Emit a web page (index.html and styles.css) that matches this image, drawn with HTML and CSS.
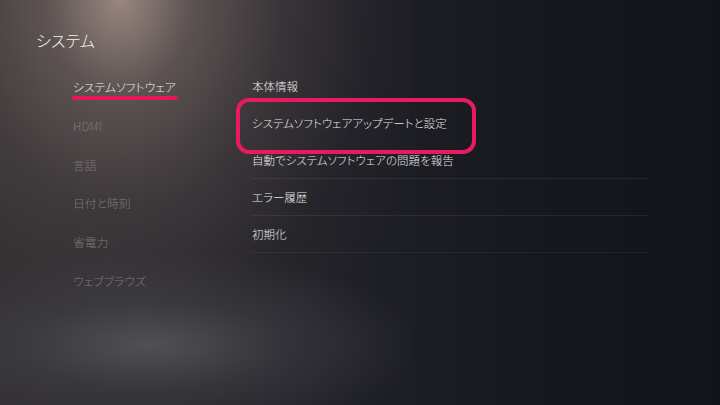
FILE: index.html
```html
<!DOCTYPE html>
<html lang="ja">
<head>
<meta charset="utf-8">
<link rel="stylesheet" href="styles.css">
</head>
<body>
<div class="screen">
  <div class="glow-top"></div>
  <div class="glow-bottom"></div>
  <header class="title">システム</header>
  <main class="main">
    <nav class="nav">
      <div class="nav-item active"><span class="label">システムソフトウェア</span></div>
      <div class="nav-item"><span class="label">HDMI</span></div>
      <div class="nav-item"><span class="label">言語</span></div>
      <div class="nav-item"><span class="label">日付と時刻</span></div>
      <div class="nav-item"><span class="label">省電力</span></div>
      <div class="nav-item"><span class="label">ウェブブラウズ</span></div>
    </nav>
    <section class="list">
      <div class="row first">本体情報</div>
      <div class="row focused">システムソフトウェアアップデートと設定</div>
      <div class="row">自動でシステムソフトウェアの問題を報告</div>
      <div class="row">エラー履歴</div>
      <div class="row">初期化</div>
    </section>
  </main>
</div>
</body>
</html>
```
FILE: styles.css
```css
* { box-sizing: border-box; }
html, body { margin: 0; padding: 0; }
body {
  width: 720px;
  height: 405px;
  overflow: hidden;
  font-family: "Noto Sans CJK JP", "Noto Sans", sans-serif;
  font-feature-settings: "palt";
  background: #15151e;
}
.screen {
  position: relative;
  width: 720px;
  height: 405px;
  overflow: hidden;
  background: linear-gradient(90deg, #302d30 0%, #29272c 25%, #1f1f26 50%, #17171f 75%, #13131c 100%);
}
.glow-top {
  position: absolute;
  left: -170px;
  top: -230px;
  width: 580px;
  height: 600px;
  background: radial-gradient(ellipse at 50% 38%, rgba(165,145,137,0.9) 0%, rgba(125,110,105,0.6) 18%, rgba(90,80,80,0.38) 40%, rgba(60,55,58,0.15) 62%, rgba(40,38,42,0) 80%);
  pointer-events: none;
}
.glow-bottom {
  position: absolute;
  left: -110px;
  top: 255px;
  width: 520px;
  height: 180px;
  background: radial-gradient(ellipse at 50% 50%, rgba(92,92,98,0.75) 0%, rgba(72,72,78,0.45) 35%, rgba(50,50,56,0) 75%);
  pointer-events: none;
}
.title {
  position: relative;
  padding: 29px 0 0 36px;
  height: 68px;
  font-size: 16px;
  line-height: 22px;
  font-weight: 300;
  color: #f2f2f2;
  letter-spacing: 0.2px;
}
.main {
  position: relative;
  display: flex;
}
.nav {
  width: 240px;
  padding-left: 73px;
}
.nav-item {
  height: 38.8px;
  line-height: 38.8px;
  font-size: 11.8px;
  font-weight: 300;
  color: #7d7877;
}
.nav-item .label { position: relative; display: inline-block; }
.nav-item.active { color: #ececec; }
.nav-item.active .label::after {
  content: "";
  position: absolute;
  left: -1px;
  right: -2px;
  top: 28px;
  height: 3.5px;
  border-radius: 2px;
  background: #e8175d;
}
.list {
  width: 408px;
}
.row {
  position: relative;
  height: 37px;
  line-height: 37px;
  margin-left: 12px;
  font-size: 11.5px;
  font-weight: 300;
  color: #e6e6e6;
  border-bottom: 1px solid rgba(255,255,255,0.07);
}
.row.first, .row.focused { border-bottom-color: transparent; }
.row:last-child { border-bottom-color: rgba(255,255,255,0.05); }
.row.focused::before {
  content: "";
  position: absolute;
  left: -16px;
  top: -7px;
  width: 232px;
  height: 48px;
  border: 4px solid #ea1a60;
  border-radius: 13px;
}
```
